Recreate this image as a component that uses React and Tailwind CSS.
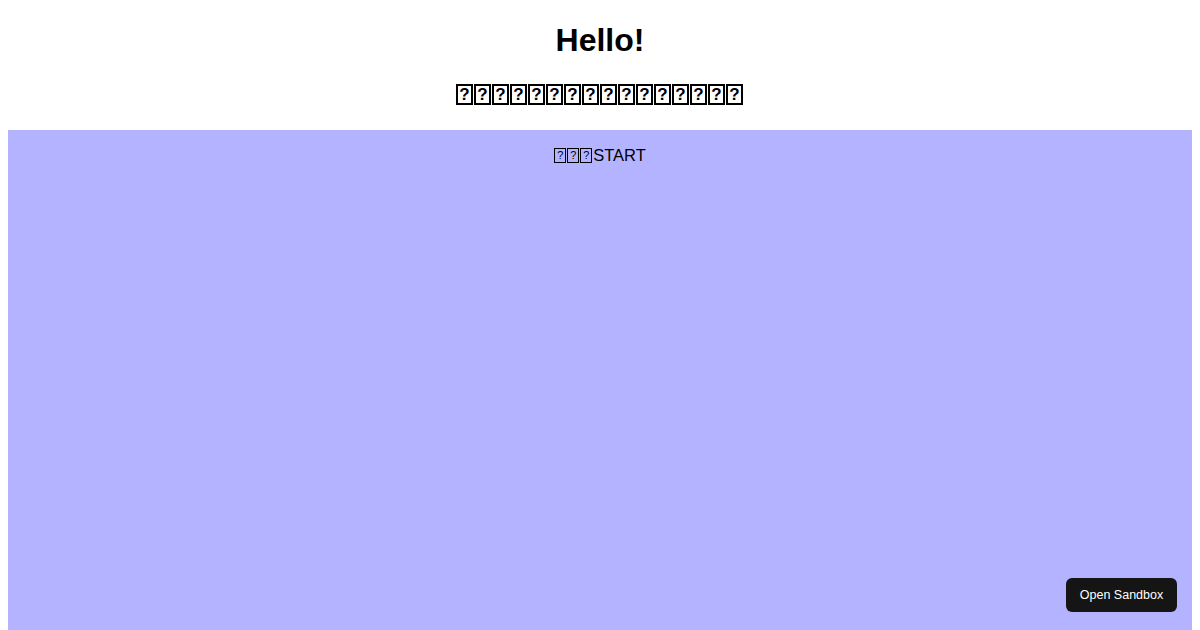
const Tofu = ({ big }) =>
  big ? (
    <span className="mr-[1px] flex h-[21px] w-[17px] items-center justify-center border-2 border-black text-[17px] font-bold leading-none">?</span>
  ) : (
    <span className="mr-[1px] flex h-[15px] w-[12px] items-center justify-center border border-black text-[11px] leading-none">?</span>
  );

export default function App() {
  return (
    <div className="relative min-h-[630px] bg-white px-2 font-['Liberation_Sans',Arial,sans-serif] text-black">
      <h1 className="pt-[22px] text-center text-[32px] font-bold leading-[37px]">Hello!</h1>
      <h2 className="mt-[21px] flex h-[28px] items-center justify-center">
        {Array.from({ length: 16 }).map((_, i) => (
          <Tofu key={i} big />
        ))}
      </h2>
      <div className="mt-[22px] h-[500px] bg-[#b3b3ff] pt-4">
        <p className="flex h-[18px] items-center justify-center text-[16.5px] leading-[18px]">
          <Tofu />
          <Tofu />
          <Tofu />
          <span>START</span>
        </p>
      </div>
      <button className="absolute bottom-[18px] right-[23px] flex h-[34px] w-[111px] items-center justify-center rounded-md bg-[#151515] font-['Liberation_Sans',Arial,sans-serif] text-[12.5px] text-white">
        Open Sandbox
      </button>
    </div>
  );
}
